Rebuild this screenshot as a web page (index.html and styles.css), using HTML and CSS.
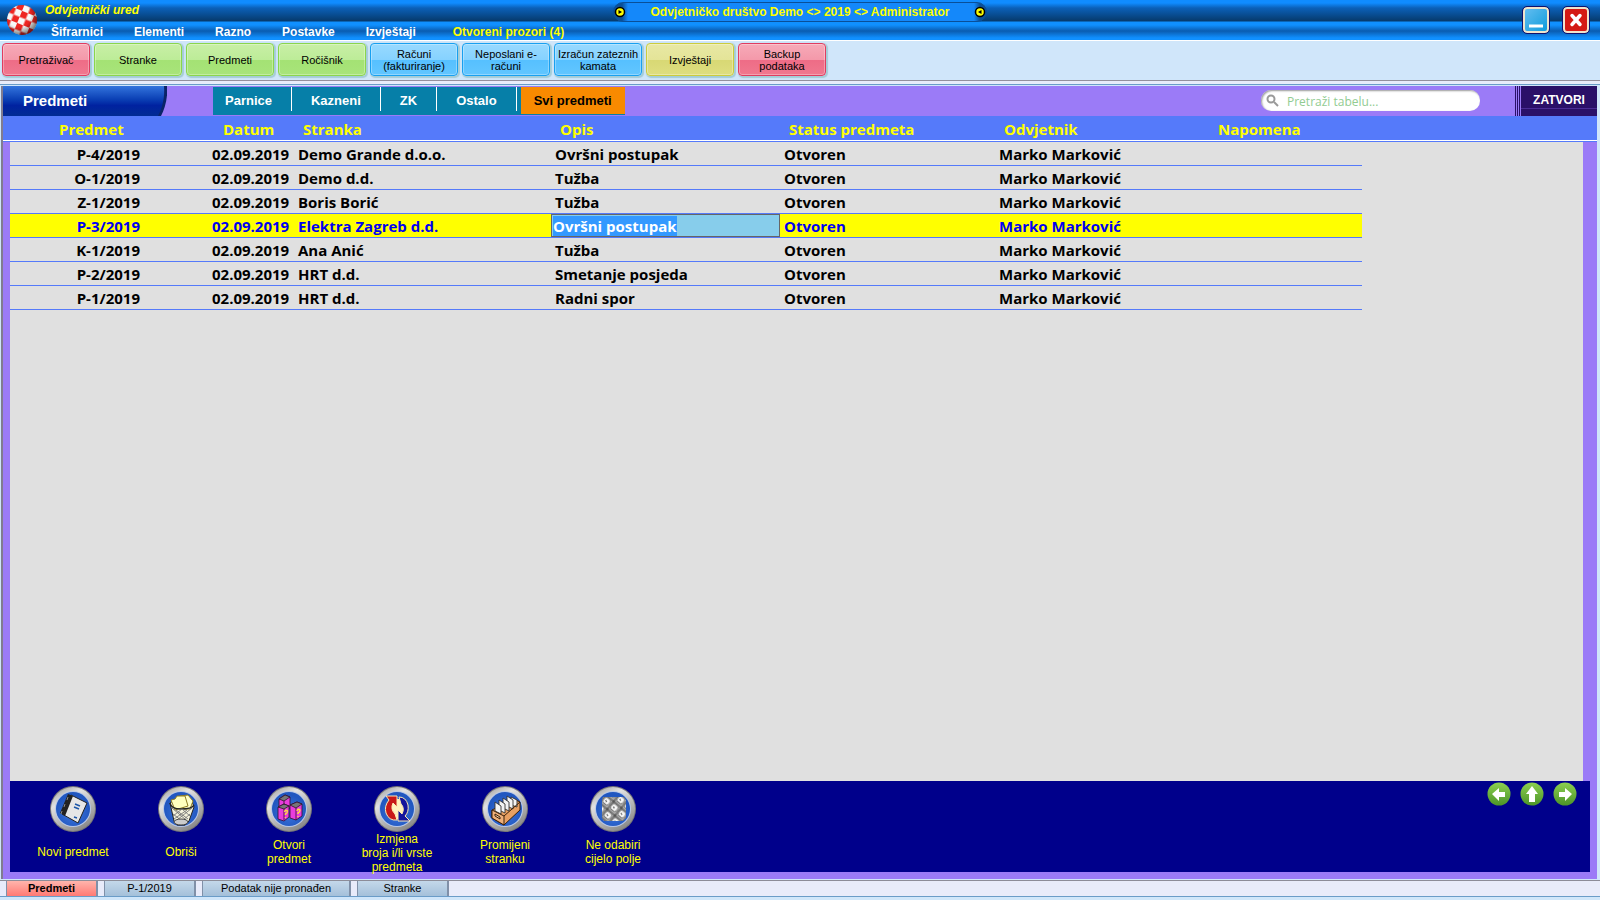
FILE: index.html
```
<!DOCTYPE html>
<html lang="hr">
<head>
    <meta charset="UTF-8">
    <meta name="viewport" content="width=device-width, initial-scale=1.0">
    <title>Odvjetnički ured</title>
    <link rel="stylesheet" href="styles.css">
</head>
<body>
    <header class="app-header">
        <svg class="logo" width="32" height="32" viewBox="0 0 32 32">
            <defs>
                <radialGradient id="ball" cx="40%" cy="35%" r="70%">
                    <stop offset="0.55" stop-color="#000" stop-opacity="0"/>
                    <stop offset="1" stop-color="#000" stop-opacity="0.6"/>
                </radialGradient>
                <pattern id="checks" width="13" height="13" patternUnits="userSpaceOnUse" patternTransform="translate(4 2) rotate(22)">
                    <rect width="13" height="13" fill="#f8f8f8"/>
                    <path d="M0 0h6.500v6.500H0zM6.500 6.500H13V13H6.500z" fill="#ee2622"/>
                </pattern>
            </defs>
            <circle cx="16" cy="16" r="15" fill="url(#checks)"/>
            <circle cx="16" cy="16" r="15" fill="url(#ball)"/>
        </svg>
        <div class="header-main">
            <span class="app-name">Odvjetnički ured</span>
            <nav class="menu">
                <a href="#">Šifrarnici</a>
                <a href="#">Elementi</a>
                <a href="#">Razno</a>
                <a href="#">Postavke</a>
                <a href="#">Izvještaji</a>
                <a href="#" class="open-windows">Otvoreni prozori (4)</a>
            </nav>
        </div>
        <div class="session">
            <svg width="12" height="12" viewBox="0 0 12 12"><circle cx="6" cy="6" r="4.500" fill="#ff0" stroke="#000" stroke-width="1.500"/><path d="M4.500 4l3.500 2-3.500 2z"/></svg>
            <span>Odvjetničko društvo Demo &lt;&gt; 2019 &lt;&gt; Administrator</span>
            <svg width="12" height="12" viewBox="0 0 12 12"><circle cx="6" cy="6" r="4.500" fill="#ff0" stroke="#000" stroke-width="1.500"/><path d="M7.500 4l-3.500 2 3.500 2z"/></svg>
        </div>
        <div class="window-buttons">
            <button class="win-btn win-min" aria-label="Smanji">
                <svg width="22" height="22" viewBox="0 0 22 22"><path d="M4 17h14" stroke="#fff" stroke-width="3"/></svg>
            </button>
            <button class="win-btn win-close" aria-label="Zatvori program">
                <svg width="22" height="22" viewBox="0 0 22 22"><path d="M7 6.500l8 9M15 6.500l-8 9" stroke="#fff" stroke-width="3.500" stroke-linecap="round"/></svg>
            </button>
        </div>
    </header>

    <div class="toolbar">
        <button class="tool red">Pretraživač</button>
        <button class="tool green">Stranke</button>
        <button class="tool green">Predmeti</button>
        <button class="tool green">Ročišnik</button>
        <button class="tool blue">Računi (fakturiranje)</button>
        <button class="tool blue">Neposlani e-računi</button>
        <button class="tool blue">Izračun zateznih kamata</button>
        <button class="tool yellow">Izvještaji</button>
        <button class="tool red">Backup<br>podataka</button>
    </div>

    <main class="window">
        <div class="window-bar">
            <h1 class="window-title">
                <svg viewBox="0 0 164 30" preserveAspectRatio="none">
                    <defs>
                        <linearGradient id="title-bg" x1="0" y1="0" x2="0" y2="1">
                            <stop offset="0" stop-color="#3374dd"/>
                            <stop offset="0.45" stop-color="#0a3fb4"/>
                            <stop offset="0.65" stop-color="#0022a0"/>
                            <stop offset="1" stop-color="#022c94"/>
                        </linearGradient>
                    </defs>
                    <path d="M0 0h164c1 12-2 22-6 30H0z" fill="#0a2468"/>
                    <path d="M0 0h161c1 12-2 22-6 30H0z" fill="url(#title-bg)"/>
                </svg>
                <span>Predmeti</span>
            </h1>
            <nav class="filters">
                <button class="filter">Parnice</button>
                <button class="filter">Kazneni</button>
                <button class="filter">ZK</button>
                <button class="filter">Ostalo</button>
                <button class="filter active">Svi predmeti</button>
            </nav>
            <label class="search">
                <svg width="14" height="14" viewBox="0 0 14 14" fill="none" stroke="#999"><circle cx="5" cy="5" r="3.500" stroke-width="2"/><path d="M8 8l4 4" stroke-width="2"/></svg>
                <input type="text" placeholder="Pretraži tabelu..." aria-label="Pretraži tabelu">
            </label>
            <button class="close-window">ZATVORI</button>
        </div>

        <div class="table-area">
            <div class="table-body-bg">
                <table class="cases">
                    <colgroup>
                        <col class="c-case"><col class="c-date"><col class="c-client"><col class="c-desc">
                        <col class="c-status"><col class="c-lawyer"><col class="c-note"><col>
                    </colgroup>
                    <thead>
                        <tr>
                            <th>Predmet</th><th>Datum</th><th>Stranka</th><th>Opis</th>
                            <th>Status predmeta</th><th>Odvjetnik</th><th>Napomena</th>
                        </tr>
                    </thead>
                    <tbody>
                        <tr><td>P-4/2019</td><td>02.09.2019</td><td>Demo Grande d.o.o.</td><td>Ovršni postupak</td><td>Otvoren</td><td>Marko Marković</td><td></td></tr>
                        <tr><td>O-1/2019</td><td>02.09.2019</td><td>Demo d.d.</td><td>Tužba</td><td>Otvoren</td><td>Marko Marković</td><td></td></tr>
                        <tr><td>Z-1/2019</td><td>02.09.2019</td><td>Boris Borić</td><td>Tužba</td><td>Otvoren</td><td>Marko Marković</td><td></td></tr>
                        <tr class="selected"><td>P-3/2019</td><td>02.09.2019</td><td>Elektra Zagreb d.d.</td><td class="editing"><input type="text" id="edit-cell" value="Ovršni postupak" aria-label="Opis"></td><td>Otvoren</td><td>Marko Marković</td><td></td></tr>
                        <tr><td>K-1/2019</td><td>02.09.2019</td><td>Ana Anić</td><td>Tužba</td><td>Otvoren</td><td>Marko Marković</td><td></td></tr>
                        <tr><td>P-2/2019</td><td>02.09.2019</td><td>HRT d.d.</td><td>Smetanje posjeda</td><td>Otvoren</td><td>Marko Marković</td><td></td></tr>
                        <tr><td>P-1/2019</td><td>02.09.2019</td><td>HRT d.d.</td><td>Radni spor</td><td>Otvoren</td><td>Marko Marković</td><td></td></tr>
                    </tbody>
                </table>
            </div>
        </div>

        <footer class="actions">
            <svg class="defs" width="0" height="0">
                <defs>
                    <linearGradient id="ring" x1="0" y1="0" x2="0.6" y2="1">
                        <stop offset="0" stop-color="#909090"/>
                        <stop offset="0.35" stop-color="#e2e2e2"/>
                        <stop offset="1" stop-color="#8c8c8c"/>
                    </linearGradient>
                    <radialGradient id="disc" cy="60%">
                        <stop offset="0" stop-color="#3f78e0"/>
                        <stop offset="1" stop-color="#2157c0"/>
                    </radialGradient>
                    <linearGradient id="nav-green" x1="0" y1="0" x2="0" y2="1">
                        <stop offset="0" stop-color="#8cd050"/>
                        <stop offset="1" stop-color="#4c9428"/>
                    </linearGradient>
                    <pattern id="keys" width="10" height="10" patternUnits="userSpaceOnUse" patternTransform="translate(16 9) rotate(40)">
                        <rect width="10" height="10" fill="#555"/>
                        <rect x="0.500" y="0.500" width="9" height="9" rx="1.500" fill="#aaa"/>
                        <rect x="1" y="1" width="7" height="6.500" rx="2" fill="#f6f6f6" stroke="#555" stroke-width="0.700"/>
                        <path d="M3 4l2 1" stroke="#333"/>
                    </pattern>
                    <g id="round">
                        <circle cx="23" cy="23" r="23" fill="#777"/>
                        <circle cx="23" cy="23" r="22" fill="url(#ring)"/>
                        <circle cx="23" cy="23" r="18" fill="#b8c8e8"/>
                        <circle cx="23" cy="23" r="17" fill="url(#disc)"/>
                    </g>
                </defs>
            </svg>
            <button class="action">
                <svg width="46" height="46" viewBox="0 0 46 46">
                    <use href="#round"/>
                    <path d="M21 9l16 8-9 20-16-9z" fill="#e6e6e6" stroke="#222"/>
                    <path d="M18 8l5 2-8 20-5-3z" fill="#222"/>
                    <path d="M25 18l5 2M24 21l5 2M24 31l3 1" stroke="#1b56a8" stroke-width="1.500"/>
                    <path d="M12 25l-1 3M15 18l-1 3M18 11l-1 3" stroke="#888"/>
                </svg>
                <span>Novi predmet</span>
            </button>
            <button class="action">
                <svg width="46" height="46" viewBox="0 0 46 46">
                    <use href="#round"/>
                    <path d="M12 17l3-2 16-2 4 5 1 3-5 14-4 4h-8l-3-4z" fill="#f4f2dc" stroke="#222"/>
                    <path d="M22 10l8-1 5 6-3 8h-6z" fill="#ffffc8" stroke="#8c7a20"/>
                    <path d="M13 14l4-1 2-3 8 0 3 10-13 4z" fill="#ffffbe" stroke="#8c7a20"/>
                    <path d="M12 17q1 6 11 6 11 0 13-4" fill="none" stroke="#222" stroke-width="1.500"/>
                    <path d="M14 22l14 12M18 24l12 9M24 23l8 7M15 28l9 7M34 22l-15 12M29 24l-13 9M24 23l-9 7M32 28l-8 7" stroke="#777" stroke-width="0.900"/>
                    <ellipse cx="23" cy="36" rx="7" ry="3" fill="#ccc" stroke="#444"/>
                </svg>
                <span>Obriši</span>
            </button>
            <button class="action">
                <svg width="46" height="46" viewBox="0 0 46 46">
                    <use href="#round"/>
                    <g stroke="#30102c" stroke-width="0.800">
                        <path d="M13 13l6-4 5 2v11l-5 3-6-2z" fill="#e93ddd"/><path d="M13 13l6-4 5 2-6 4z" fill="#777"/>
                        <path d="M24 19l7-3 5 2v12l-6 4-6-2z" fill="#e93ddd"/><path d="M24 19l7-3 5 2-6 4z" fill="#777"/>
                        <path d="M12 21l6-3 5 2v11l-5 4-6-2z" fill="#e93ddd"/><path d="M12 21l6-3 5 2-5 3z" fill="#777"/>
                        <path d="M18 23v11M30 22v12M18 15v4" />
                    </g>
                    <path d="M18.500 26q1-3 3-1 0 2-2 3v1M19.500 31v1M31 25q1-3 3-1 0 2-2 3v1M32 30v1" fill="none" stroke="#ffe040" stroke-width="1.400"/>
                </svg>
                <span>Otvori predmet</span>
            </button>
            <button class="action">
                <svg width="46" height="46" viewBox="0 0 46 46">
                    <use href="#round"/>
                    <path d="M19 13h10l5 9-4 11H17l-4-10z" fill="#fff2c0"/>
                    <path d="M12 10h11v11l-4-4q-3 6 2 11l2 6q-8 1-11-7-2-7 3-13z" fill="#c81818" stroke="#ffe9b0"/>
                    <path d="M25 11q7 0 9 8 1 7-3 11l5 5H24V24l4 4q3-6-1-10z" fill="#14149c" stroke="#ffe9b0"/>
                </svg>
                <span>Izmjena<br>broja i/li vrste<br>predmeta</span>
            </button>
            <button class="action">
                <svg width="46" height="46" viewBox="0 0 46 46">
                    <use href="#round"/>
                    <path d="M10 24l22-11 6 3v8L22 39l-12-7z" fill="#e8a062" stroke="#3a2008"/>
                    <g fill="#f4f4f4" stroke="#333" stroke-width="0.900">
                        <path d="M29 11l6 3v7l-6-2z"/><path d="M25 10l6 4v9l-6-3z"/><path d="M21 12l6 4v9l-6-3z"/><path d="M17 14l6 4v9l-6-3z"/><path d="M13 16l6 4v8l-6-3z"/>
                    </g>
                    <path d="M10 24l12 6v9l-12-7z" fill="#eeb07a" stroke="#3a2008"/>
                    <path d="M22 30l16-14" stroke="#3a2008"/>
                    <path d="M13 28l5 3v2l-5-3z" fill="#f7d2a8" stroke="#3a2008"/>
                </svg>
                <span>Promijeni stranku</span>
            </button>
            <button class="action">
                <svg width="46" height="46" viewBox="0 0 46 46">
                    <use href="#round"/>
                    <path d="M13 11h21l2 3v18l-3 3H14l-2-3V14z" fill="url(#keys)"/>
                </svg>
                <span>Ne odabiri cijelo polje</span>
            </button>
            <div class="record-nav">
                <button aria-label="Prethodni">
                    <svg width="24" height="24" viewBox="0 0 24 24"><circle cx="12" cy="12" r="11.500" fill="url(#nav-green)"/><path d="M5 12l7-6v4h6v5h-6v4z" fill="#fff"/></svg>
                </button>
                <button aria-label="Gore">
                    <svg width="24" height="24" viewBox="0 0 24 24"><circle cx="12" cy="12" r="11.500" fill="url(#nav-green)"/><path d="M12 4l6 8h-3v8H9v-8H6z" fill="#fff"/></svg>
                </button>
                <button aria-label="Sljedeći">
                    <svg width="24" height="24" viewBox="0 0 24 24"><circle cx="12" cy="12" r="11.500" fill="url(#nav-green)"/><path d="M19 12l-7-6v4H6v5h6v4z" fill="#fff"/></svg>
                </button>
            </div>
        </footer>
    </main>

    <nav class="window-tabs">
        <button class="window-tab current">Predmeti</button>
        <button class="window-tab">P-1/2019</button>
        <button class="window-tab wide">Podatak nije pronađen</button>
        <button class="window-tab">Stranke</button>
    </nav>

    <script>
        const editCell = document.getElementById('edit-cell');
        editCell.focus();
        editCell.select();
    </script>
</body>
</html>
```
FILE: styles.css
```
* {
    box-sizing: border-box;
}
body {
    margin: 0;
    height: 100vh;
    display: flex;
    flex-direction: column;
    font-family: "Liberation Sans", Arial, sans-serif;
    background: #d0e6fa;
    overflow: hidden;
}
button {
    font-family: inherit;
    border: none;
    padding: 0;
    cursor: pointer;
}

/* header */
.app-header {
    position: relative;
    display: flex;
    height: 41px;
    padding-left: 6px;
    border-bottom: 1px solid #fff;
    background: linear-gradient(to bottom, #108cff 0, #108cff 3px, #0b60b8 8px, #094f96 14px, #063a6c 21px, #1090ff 22px, #1090ff 25px, #0a5cb0 31px, #1090ff 38px, #1090ff 40px);
    font-size: 12px;
    font-weight: bold;
}
.logo {
    margin-top: 4px;
}
.header-main {
    flex: 1;
    display: flex;
    flex-direction: column;
    padding-left: 7px;
}
.app-name {
    height: 22px;
    line-height: 20px;
    color: #ff0;
    font-style: italic;
}
.menu {
    display: flex;
    gap: 31px;
    padding-left: 6px;
    line-height: 24px;
}
.menu a {
    color: #fff;
    text-decoration: none;
}
.menu .open-windows {
    margin-left: 6px;
    color: #ff0;
}
.session {
    position: absolute;
    top: 2px;
    left: 50%;
    transform: translateX(-50%);
    width: 374px;
    height: 20px;
    display: flex;
    align-items: center;
    justify-content: space-between;
    border-radius: 10px;
    border: 1px solid #0a4f98;
    background: linear-gradient(to right, #0a4f98 8px, #1488fa 14px, #1488fa 360px, #0a4f98 366px);
    color: #ff0;
}
.window-buttons {
    display: flex;
    gap: 14px;
    padding: 7px 11px 0 0;
}
.win-btn {
    width: 26px;
    height: 26px;
    border: 2px solid #efe4cc;
    border-radius: 4px;
    outline: 1px solid #10106c;
}
.win-btn svg {
    display: block;
}
.win-min {
    background: linear-gradient(135deg, #62bdf0, #109cdc);
}
.win-close {
    background: #d41a14;
}

/* toolbar */
.toolbar {
    display: flex;
    gap: 4px;
    height: 44px;
    padding: 2px 0 0 2px;
    border-bottom: 1px solid #6a9cc8;
    background: linear-gradient(to bottom, #d0e6fa 39px, #938f9c 39px, #938f9c 40px, #e8ecfa 40px);
}
.tool {
    width: 88px;
    height: 33px;
    padding: 0;
    border: 1px solid;
    border-radius: 4px;
    box-shadow: 1px 1px 1px 1px #a4ccd6, inset 0 0 0 1px rgba(255, 255, 255, 0.3);
    font-size: 11px;
    line-height: 12px;
    color: #000;
}
.red {
    border-color: #e03c60;
    background: linear-gradient(to bottom, #f6aab8 0, #f499aa 50%, #ee6c86 52%, #f0788f 100%);
}
.green {
    border-color: #8ad64c;
    background: linear-gradient(to bottom, #c8efa6 0, #bdec98 50%, #a4e274 52%, #a8e47a 100%);
}
.blue {
    border-color: #18a0f0;
    background: linear-gradient(to bottom, #98daff 0, #86d2ff 50%, #56c0ff 52%, #62c6ff 100%);
}
.yellow {
    border-color: #cccc3c;
    background: linear-gradient(to bottom, #e8e8a4 0, #e4e498 50%, #d8d874 52%, #dede80 100%);
}

/* window */
.window {
    flex: 1;
    display: flex;
    flex-direction: column;
    min-height: 0;
    margin: 1px 3px 1px 1px;
    border-left: 2px solid #807c90;
    background: #9b7bf7;
}
.window-bar {
    display: flex;
    height: 30px;
}
.window-title {
    position: relative;
    width: 164px;
    margin: 0;
    padding-left: 20px;
    font-size: 15px;
    line-height: 30px;
    color: #fff;
}
.window-title svg {
    position: absolute;
    top: 0;
    left: 0;
    width: 100%;
    height: 100%;
}
.window-title span {
    position: relative;
}
.filters {
    display: flex;
    height: 28px;
    margin: 1px auto 0 46px;
    background: #067fa8;
}
.filter {
    height: 24px;
    padding: 2px 19px 0;
    border-right: 1px solid #fff;
    background: none;
    color: #fff;
    font-size: 13px;
    font-weight: bold;
}
.filter:first-child {
    padding-left: 12px;
}
.filter.active {
    height: 27px;
    margin-left: 4px;
    padding: 0 13px 1px;
    border: none;
    background: #f88a00;
    color: #000;
}
.search {
    display: flex;
    align-items: center;
    width: 219px;
    height: 21px;
    margin: 4px 35px 0 0;
    padding: 0 5px;
    border-radius: 10px;
    background: #fff;
    box-shadow: inset 1px 1px 2px #999;
}
.search input {
    flex: 1;
    min-width: 0;
    margin-left: 7px;
    padding: 2px 0 0;
    border: none;
    outline: none;
    background: none;
    font-family: "Open Sans", sans-serif;
    font-size: 12px;
    line-height: 18px;
}
.search input::placeholder {
    color: #92cc92;
    opacity: 1;
}
.close-window {
    width: 82px;
    padding: 0 0 3px 6px;
    background: linear-gradient(to right, #2a1068 1px, #9b7bf7 1px, #9b7bf7 2px, #2a1068 2px, #2a1068 3px, #9b7bf7 3px, #9b7bf7 4px, #2a1068 4px, #2a1068 5px, #9b7bf7 5px, #9b7bf7 6px, transparent 6px),
        linear-gradient(to bottom, #2a1068 22px, #4a2c94 22px, #4a2c94 23px, #2a1068 23px);
    color: #fff;
    font-size: 12px;
    font-weight: bold;
}

/* table */
.table-area {
    flex: 1;
    min-height: 0;
    padding: 0 14px 0 7px;
    background: linear-gradient(to bottom, #557afa 24px, #fff 24px, #fff 25px, #557afa 25px, #557afa 26px, transparent 26px);
}
.table-body-bg {
    height: 100%;
    background: linear-gradient(to bottom, transparent 26px, #e0e0e0 26px);
}
.cases {
    width: 100%;
    table-layout: fixed;
    border-collapse: separate;
    border-spacing: 0;
    font-family: "Open Sans", "Noto Sans", sans-serif;
    font-size: 15px;
    font-weight: bold;
}
.c-case { width: 198px; }
.c-date { width: 86px; }
.c-client { width: 257px; }
.c-desc { width: 229px; }
.c-status { width: 215px; }
.c-lawyer { width: 214px; }
.c-note { width: 153px; }
.cases th {
    height: 26px;
    padding: 0 0 0 9px;
    line-height: 26px;
    color: #ff0;
    text-align: left;
}
.cases th:first-child {
    padding-left: 49px;
}
.cases th:nth-child(2) {
    padding-left: 15px;
}
.cases td {
    height: 24px;
    padding: 2px 0 0 4px;
    border-bottom: 1px solid #557afa;
    line-height: 21px;
    white-space: nowrap;
}
.cases td:first-child {
    padding-right: 68px;
    text-align: right;
}
.cases .selected td {
    background: #ff0;
    color: #0000f0;
}
.cases .selected .editing {
    padding: 0;
}
.editing input {
    display: block;
    width: 100%;
    height: 23px;
    padding: 1px 1px 0;
    border: 1px solid #666;
    outline: none;
    background: #87cdeb;
    font: inherit;
    color: #0000f0;
}
.editing input::selection {
    background: #3399ff;
    color: #fff;
}

/* actions */
.actions {
    display: flex;
    height: 91px;
    margin: 0 7px;
    padding: 5px 9px 0;
    background: #00008b;
}
.defs {
    position: absolute;
}
.action {
    display: flex;
    flex-direction: column;
    align-items: center;
    width: 108px;
    background: none;
    color: #ff0;
    font-size: 12px;
    line-height: 14px;
}
.action svg {
    flex: none;
}
.action span {
    display: flex;
    align-items: center;
    height: 44px;
    max-width: 78px;
}
.record-nav {
    display: flex;
    align-items: flex-start;
    gap: 9px;
    margin: -4px 4px 0 auto;
}
.record-nav button {
    background: none;
}
.record-nav svg {
    display: block;
}
.window::after {
    content: "";
    height: 7px;
}

/* open windows */
.window-tabs {
    display: flex;
    gap: 6px;
    height: 20px;
    padding: 0 6px 4px;
    border-top: 1px solid #8c8c98;
    background: linear-gradient(to bottom, #e8ebfa 15px, #6a9cc8 15px, #6a9cc8 16px, #d0e6fa 16px);
}
.window-tab {
    width: 92px;
    height: 15px;
    border-left: 1px solid #8090a8;
    border-right: 2px solid #8090a8;
    background: linear-gradient(to bottom, #c4d8ea, #a4c0da);
    font-size: 11px;
    line-height: 15px;
    color: #000;
}
.window-tab.wide {
    width: 149px;
}
.window-tab.current {
    background: linear-gradient(to bottom, #ffb4ac, #ff7a74);
    font-weight: bold;
}
```
